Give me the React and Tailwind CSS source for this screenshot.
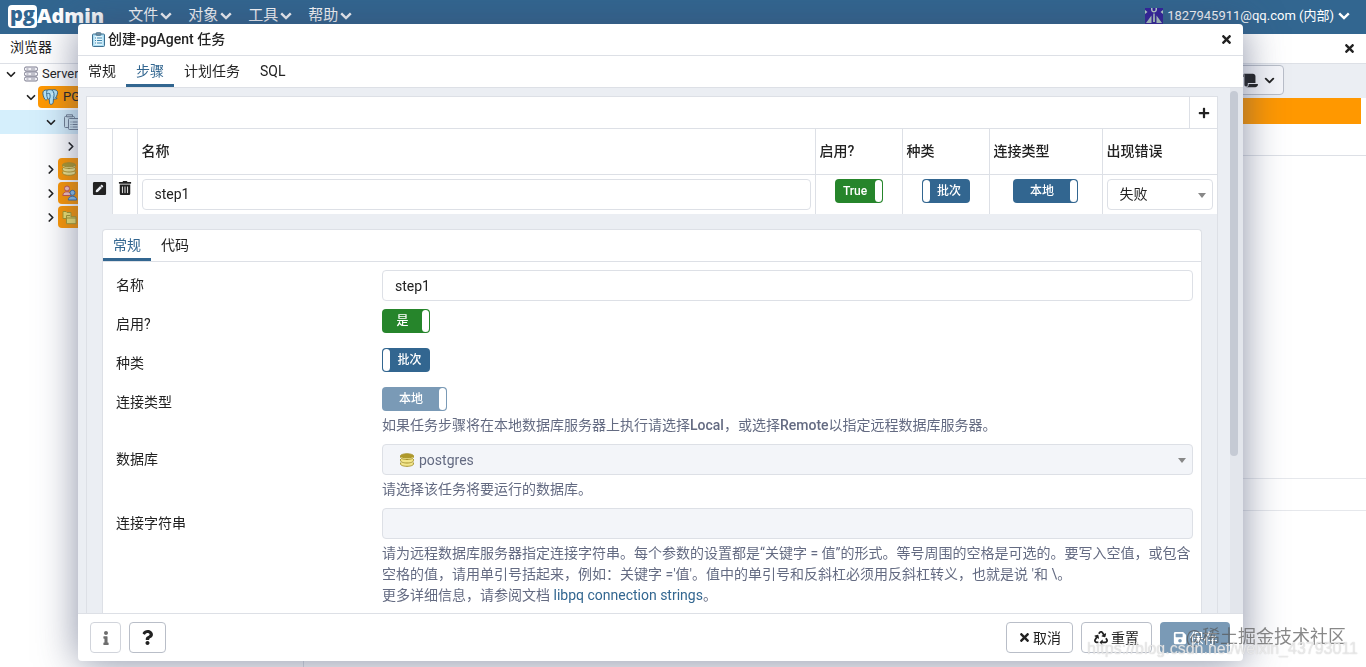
import { useState } from "react";
import {
  FaInfo,
  FaPenSquare,
  FaPlus,
  FaQuestion,
  FaRecycle,
  FaSave,
  FaScroll,
  FaTimes,
  FaTrashAlt,
} from "react-icons/fa";
import { FiChevronDown, FiChevronRight } from "react-icons/fi";

const MENUS = ["文件", "对象", "工具", "帮助"];

function MenuChevron() {
  return (
    <svg width="12" height="8" viewBox="0 0 12 8" fill="none" aria-hidden="true">
      <path d="M1.200 1.300L6 6l4.800-4.700" stroke="currentColor" strokeWidth="2.400" />
    </svg>
  );
}

function ClipboardIcon() {
  return (
    <svg width="13" height="15" viewBox="0 0 13 15" aria-hidden="true">
      <rect x="0.5" y="2" width="12" height="12.5" rx="1" fill="#a9dcf3" stroke="#3f6f8f" />
      <rect x="2.5" y="4" width="8" height="9" fill="#e6f6fc" />
      <rect x="4" y="0.5" width="5" height="3" rx="1" fill="#6f8a9c" stroke="#3f6f8f" strokeWidth="0.6" />
      <path d="M3 6h1M5 6h5M3 8.500h1M5 8.500h5M3 11h1M5 11h5" stroke="#3f87b0" />
    </svg>
  );
}

function ServersIcon() {
  return (
    <svg width="14" height="16" viewBox="0 0 14 16" fill="#f1f1f6" stroke="#7d7d8f" aria-hidden="true">
      <rect x="0.5" y="1" width="13" height="4" rx="1.5" />
      <rect x="0.5" y="6" width="13" height="4" rx="1.5" />
      <rect x="0.5" y="11" width="13" height="4" rx="1.5" />
      <path d="M2.5 3h2M2.5 8h2M2.5 13h2M7 3h4M7 8h4M7 13h4" strokeWidth="0.8" />
    </svg>
  );
}

function ElephantIcon() {
  return (
    <svg width="17" height="16" viewBox="0 0 17 16" aria-hidden="true">
      <path
        d="M5 1.2C2.4.6.8 2 .9 4.3c.1 2.4 1.4 6 2.8 6.6.8.3 1.5-.6 2-1.2.5.5 1 .6 1.6.6l.2 3.6c.1 1.2 1 1.6 1.9 1.4 1.200-.2 1.700-.9 1.800-2l.3-3.600c1.200.6 2.700.4 3.700-.4-.7-.1-1.300-.1-1.600-.5 1.500-2 2.400-5.200 1.800-6.400C14.200.4 11.700.4 10 1 8.500.5 6.400.6 5 1.200z"
        fill="#b4e4f7"
        stroke="#2a5f86"
        strokeWidth="0.9"
      />
      <path d="M5 1.500C4.300 4 4.600 7 5.600 9.600M10.200 1.200c1.800 1.700 2.400 4.300 1.400 8M7.400 10c.9-1.400.9-3.600.3-5.500M5 5c1-.8 2-.8 2.700-.4" fill="none" stroke="#2a5f86" strokeWidth="0.9" />
      <path d="M9.500 5.200c.5-.4 1.200-.3 1.500.1" fill="none" stroke="#fff" />
    </svg>
  );
}

function JobsIcon() {
  return (
    <svg width="16" height="16" viewBox="0 0 16 16" fill="#d3e9f4" stroke="#6e7f92" aria-hidden="true">
      <rect x="0.500" y="2.500" width="10" height="11" rx="1" />
      <path d="M2.500 0.800h6v2h-6z" />
      <rect x="4.500" y="4.500" width="11" height="11" rx="1" />
      <path d="M6.500 8h1M8.500 8h5M6.500 10.500h1M8.500 10.500h5M6.500 13h1M8.500 13h5" />
    </svg>
  );
}

function DatabaseIcon() {
  return (
    <svg width="14" height="14" viewBox="0 0 14 14" fill="#f3e68b" stroke="#a8942c" aria-hidden="true">
      <path d="M.600 9.500v1.600c0 1.200 2.800 2.200 6.400 2.200s6.400-1 6.400-2.200V9.500" />
      <path d="M.600 6v1.800C.600 9 3.400 10 7 10s6.400-1 6.400-2.200V6" />
      <path d="M.600 2.800v1.500c0 1.200 2.800 2.200 6.400 2.200s6.400-1 6.400-2.200V2.800" />
      <ellipse cx="7" cy="2.800" rx="6.400" ry="2" fill="#b09a2b" />
    </svg>
  );
}

function RolesIcon() {
  return (
    <svg width="16" height="16" viewBox="0 0 16 16" aria-hidden="true">
      <g fill="#f6c5c0" stroke="#c9544d">
        <circle cx="5" cy="3.500" r="2.500" />
        <path d="M.800 10.500c0-5 8.400-5 8.400 0z" />
      </g>
      <g fill="#8fc4ef" stroke="#3a6fa8">
        <circle cx="10.500" cy="7.800" r="2.500" />
        <path d="M6.300 15c0-5 8.400-5 8.400 0z" />
      </g>
    </svg>
  );
}

function TablespaceIcon() {
  return (
    <svg width="15" height="15" viewBox="0 0 15 15" fill="#f1e46e" stroke="#a59a2c" aria-hidden="true">
      <path d="M1 1.500h3l1 1h4v6H1z" />
      <path d="M4.500 5.500h3.500l1 1.200h5v7H4.500z" />
      <path d="M4.500 8h9.500" />
    </svg>
  );
}

function Avatar() {
  return (
    <svg width="18" height="16" viewBox="0 0 18 16" aria-hidden="true">
      <rect width="18" height="16" fill="#33209c" />
      <path
        d="M6 0v1.500C6 3.500 7.500 4.500 9 4.500s3-1 3-3V0h-1.500v1.500C10.500 2.500 9.800 3 9 3s-1.500-.5-1.500-1.500V0zM8.300 5.500h1.400L10 14H8zM1 15l5.500-7.500V15zM17 15l-5.500-7.500V15zM0 2l2.500 2L0 6zM18 2l-2.500 2L18 6z"
        fill="#b9d3c8"
      />
    </svg>
  );
}

const TREE = [
  { label: "Servers", icon: ServersIcon, indent: "pl-1", open: true },
  { label: "PG", icon: ElephantIcon, indent: "pl-6", open: true, color: true },
  { label: "pgAgent", icon: JobsIcon, indent: "pl-11", open: true, active: true },
  { label: "", icon: null, indent: "pl-16", open: false },
  { label: "", icon: DatabaseIcon, indent: "pl-11", open: false, color: true },
  { label: "", icon: RolesIcon, indent: "pl-11", open: false, color: true },
  { label: "", icon: TablespaceIcon, indent: "pl-11", open: false, color: true },
];

function TopBar() {
  return (
    <header className="flex h-[34px] shrink-0 items-center bg-[#326690] pr-4 pb-0.5 pl-2 text-white">
      <div className="flex items-center font-['Open_Sans',sans-serif] text-xl leading-6 font-extrabold">
        <span className="flex h-[23px] items-center rounded-sm bg-white px-0.5 pb-1 text-[#326690]">pg</span>
        <span>Admin</span>
      </div>
      <nav className="ml-6 flex gap-4">
        {MENUS.map((m) => (
          <button key={m} type="button" className="flex items-center gap-0.5 text-[15px]">
            {m}
            <MenuChevron />
          </button>
        ))}
      </nav>
      <button type="button" className="ml-auto flex items-center gap-1 text-[13px]">
        <Avatar />
        <span>1827945911@qq.com (内部)</span>
        <MenuChevron />
      </button>
    </header>
  );
}

function Browser() {
  return (
    <aside className="w-[304px] shrink-0 overflow-hidden border-r border-[#dde0e6] bg-white">
      <h2 className="flex h-[30px] items-center border-b border-[#dde0e6] pb-1 pl-2.5 text-sm">浏览器</h2>
      <ul className="-mt-0.5">
        {TREE.map((n, i) => (
          <li
            key={i}
            className={`flex h-6 ${n.color ? "items-start" : "items-center"} ${n.indent} ${
              n.active ? "bg-[#d5effc]" : ""
            }`}
          >
            <span className="flex h-[22px] w-[14px] shrink-0 items-center justify-center text-[#222]">
              {n.open ? <FiChevronDown size={15} strokeWidth={3} /> : <FiChevronRight size={15} strokeWidth={3} />}
            </span>
            <span
              className={`flex h-[22px] items-center gap-1 rounded-sm text-[13px] ${
                n.color ? "bg-[#ff9800] pr-24 pl-1" : "pl-1.5"
              }`}
            >
              {n.icon && <n.icon />}
              {n.label}
            </span>
          </li>
        ))}
      </ul>
    </aside>
  );
}

function Workspace() {
  return (
    <main className="flex min-w-0 flex-1 flex-col bg-white">
      <div className="flex h-[30px] items-center justify-end border-b border-[#dde0e6] pr-2.5">
        <button type="button" aria-label="关闭面板">
          <FaTimes size={13} />
        </button>
      </div>
      <div className="flex h-[34px] items-start justify-end bg-[#ebeef3] pt-px pr-[82px]">
        <button
          type="button"
          aria-label="脚本"
          className="flex h-[30px] items-center gap-1 rounded-sm border border-[#b9bec8] bg-[#f4f5f9] px-1.5"
        >
          <FaScroll size={17} />
          <FiChevronDown size={15} strokeWidth={3} />
        </button>
      </div>
      <div className="mr-[5px] h-[26px] bg-[#ff9800]" />
      <div className="h-8 border-b border-[#dde0e6]" />
      <div className="h-[323px] border-b border-[#e6e8ec]" />
      <div className="h-8 border-b border-[#e6e8ec]" />
    </main>
  );
}

const TOGGLE_BG = {
  green: "bg-[#26852b]",
  blue: "bg-[#326690]",
  muted: "bg-[#7a9ab6]",
};

/* The handle sits on the right when the switch is on */
function Toggle({ text, label, defaultOn = false, tone, wide = false, disabled = false }) {
  const [on, setOn] = useState(defaultOn);
  return (
    <label
      className={`flex h-6 items-center rounded-sm p-px text-xs font-medium text-white ${TOGGLE_BG[tone]} ${
        wide ? "w-[65px]" : "w-12"
      } ${on ? "" : "flex-row-reverse"}`}
    >
      <input
        type="checkbox"
        aria-label={label}
        className="sr-only"
        checked={on}
        disabled={disabled}
        onChange={(e) => setOn(e.target.checked)}
      />
      <span className="flex-1 text-center leading-5">{text}</span>
      <span className="h-[22px] w-[7px] rounded-sm bg-white" />
    </label>
  );
}

const TH = "border-r border-b border-[#dde0e6] px-1 text-left font-medium last:border-r-0";
const TD = "border-r border-[#dde0e6] px-1 pt-1 align-top last:border-r-0";

function StepsTable() {
  return (
    <table className="w-full table-fixed border-collapse">
      <colgroup>
        <col className="w-[25px]" />
        <col className="w-[25px]" />
        <col />
        <col className="w-[87px]" />
        <col className="w-[87px]" />
        <col className="w-[113px]" />
        <col className="w-[115px]" />
      </colgroup>
      <thead>
        <tr className="h-[45px] bg-white">
          <th className={TH} />
          <th className={TH} />
          <th className={TH}>名称</th>
          <th className={TH}>启用?</th>
          <th className={TH}>种类</th>
          <th className={TH}>连接类型</th>
          <th className={TH}>出现错误</th>
        </tr>
      </thead>
      <tbody>
        <tr className="h-10 bg-white">
          <td className={`${TD} bg-[#ebeef3]`}>
            <button type="button" aria-label="编辑" className="mt-0.5 flex w-full justify-center">
              <FaPenSquare size={15} />
            </button>
          </td>
          <td className={TD}>
            <button type="button" aria-label="删除" className="mt-0.5 flex w-full justify-center">
              <FaTrashAlt size={14} />
            </button>
          </td>
          <td className={TD}>
            <input
              aria-label="名称"
              defaultValue="step1"
              className="block h-[31px] w-full rounded border border-[#dde0e6] px-3"
            />
          </td>
          <td className={TD}>
            <div className="flex justify-center">
              <Toggle text="True" label="启用?" tone="green" defaultOn />
            </div>
          </td>
          <td className={TD}>
            <div className="flex justify-center">
              <Toggle text="批次" label="种类" tone="blue" />
            </div>
          </td>
          <td className={TD}>
            <div className="flex justify-center">
              <Toggle text="本地" label="连接类型" tone="blue" defaultOn wide />
            </div>
          </td>
          <td className={TD}>
            <div className="relative">
              <select
                aria-label="出现错误"
                className="block h-[31px] w-full appearance-none rounded border border-[#dde0e6] bg-white px-3"
              >
                <option>失败</option>
                <option>成功</option>
                <option>忽略</option>
              </select>
              <Caret />
            </div>
          </td>
        </tr>
      </tbody>
    </table>
  );
}

function Caret() {
  return (
    <span className="pointer-events-none absolute top-[14px] right-[7px] border-x-4 border-t-5 border-x-transparent border-t-[#888]" />
  );
}

function Field({ label, htmlFor, help, children }) {
  return (
    <div className="grid grid-cols-[266px_minmax(0,1fr)]">
      <label htmlFor={htmlFor} className="leading-[31px]">
        {label}
      </label>
      <div className="min-h-[31px]">
        {children}
        {help && <p className="mt-1 leading-[21px] text-[#646b82]">{help}</p>}
      </div>
    </div>
  );
}

function StepForm() {
  return (
    <section className="mx-[15px] mt-[15px] rounded-t border border-b-0 border-[#dde0e6] bg-white">
      <div className="flex h-8 border-b border-[#dde0e6]">
        <button type="button" className="border-b-3 border-[#326690] px-2.5 pt-0.5 text-[#326690]">
          常规
        </button>
        <button type="button" className="border-b-3 border-transparent px-2.5 pt-0.5">
          代码
        </button>
      </div>
      <div className="space-y-2 pt-2 pr-2 pb-10 pl-[13px]">
        <Field label="名称" htmlFor="step-name">
          <input
            id="step-name"
            defaultValue="step1"
            className="block h-[31px] w-full rounded border border-[#dde0e6] px-3"
          />
        </Field>
        <Field label="启用?">
          <Toggle text="是" label="启用?" tone="green" defaultOn />
        </Field>
        <Field label="种类">
          <Toggle text="批次" label="种类" tone="blue" />
        </Field>
        <Field
          label="连接类型"
          help={
            <>
              如果任务步骤将在本地数据库服务器上执行请选择<b className="font-medium">Local</b>，或选择
              <b className="font-medium">Remote</b>以指定远程数据库服务器。
            </>
          }
        >
          <Toggle text="本地" label="连接类型" tone="muted" defaultOn wide disabled />
        </Field>
        <Field label="数据库" htmlFor="step-db" help="请选择该任务将要运行的数据库。">
          <div className="relative">
            <select
              id="step-db"
              disabled
              className="block h-[31px] w-full appearance-none rounded border border-[#dde0e6] bg-[#f3f5f9] pl-9 text-[#646b82] opacity-100"
            >
              <option>postgres</option>
            </select>
            <span className="pointer-events-none absolute top-[9px] left-[18px]">
              <DatabaseIcon />
            </span>
            <Caret />
          </div>
        </Field>
        <Field
          label="连接字符串"
          htmlFor="step-conn"
          help={
            <>
              请为远程数据库服务器指定连接字符串。每个参数的设置都是“关键字 = 值”的形式。等号周围的空格是可选的。要写入空值，或包含空格的值，请用单引号括起来，例如：关键字
              ='值'。值中的单引号和反斜杠必须用反斜杠转义，也就是说 '和 \。
              <br />
              更多详细信息，请参阅文档{" "}
              <a href="#libpq" className="text-[#326690]">
                libpq connection strings
              </a>
              。
            </>
          }
        >
          <input
            id="step-conn"
            disabled
            className="block h-[31px] w-full rounded border border-[#dde0e6] bg-[#f3f5f9] px-3"
          />
        </Field>
      </div>
    </section>
  );
}

const DIALOG_TABS = ["常规", "步骤", "计划任务", "SQL"];
const FOOT_BTN = "flex h-[31px] items-center justify-center rounded border border-[#b9bec8] bg-white";

function JobDialog() {
  const [tab, setTab] = useState("步骤");
  return (
    <div
      role="dialog"
      aria-label="创建-pgAgent 任务"
      className="fixed top-6 right-[123px] bottom-1.5 left-[78px] flex flex-col overflow-hidden rounded bg-white shadow-[0_2px_40px_rgba(60,70,105,0.6)]"
    >
      <div className="flex h-8 shrink-0 items-center gap-[3px] border-b border-[#dde0e6] pr-2.5 pl-3.5">
        <ClipboardIcon />
        <h1 className="pb-0.5 font-medium">创建-pgAgent 任务</h1>
        <button type="button" aria-label="关闭" className="ml-auto">
          <FaTimes size={13} />
        </button>
      </div>
      <div className="flex h-8 shrink-0 border-b border-[#dde0e6]">
        {DIALOG_TABS.map((t) => (
          <button
            key={t}
            type="button"
            onClick={() => setTab(t)}
            className={`border-b-3 px-2.5 pt-0.5 ${
              t === tab ? "border-[#326690] text-[#326690]" : "border-transparent"
            }`}
          >
            {t}
          </button>
        ))}
      </div>
      <div className="flex min-h-0 flex-1 bg-[#ebeef3]">
        <div className="min-w-0 flex-1 overflow-hidden pt-2 pr-3 pl-2">
          <div className="border border-b-0 border-[#dde0e6]">
            <div className="flex h-8 justify-end border-b border-[#dde0e6] bg-white">
              <button
                type="button"
                aria-label="添加"
                className="flex w-7 items-center justify-center border-l border-[#dde0e6]"
              >
                <FaPlus size={12} />
              </button>
            </div>
            <StepsTable />
            <StepForm />
          </div>
        </div>
        <div className="w-[13px] bg-[#e3e6ec] pt-[3px]">
          <div className="h-[70%] w-2 rounded-full bg-[#c5cad4]" />
        </div>
      </div>
      <div className="flex h-12 shrink-0 items-center gap-2 border-t border-[#dde0e6] pr-[13px] pl-3">
        <button type="button" aria-label="信息" disabled className={`${FOOT_BTN} w-[31px] opacity-65`}>
          <FaInfo size={14} />
        </button>
        <button type="button" aria-label="帮助" className={`${FOOT_BTN} w-[37px]`}>
          <FaQuestion size={15} />
        </button>
        <button type="button" className={`${FOOT_BTN} ml-auto w-[67px] gap-0.5`}>
          <FaTimes size={13} />
          取消
        </button>
        <button type="button" className={`${FOOT_BTN} w-[71px] gap-[3px]`}>
          <FaRecycle size={14} />
          重置
        </button>
        <button
          type="button"
          disabled
          className="flex h-[31px] w-[70px] items-center justify-center gap-[3px] rounded bg-[#7a9ab6] text-white"
        >
          <FaSave size={14} />
          保存
        </button>
      </div>
    </div>
  );
}

export default function App() {
  return (
    <div className="flex h-screen flex-col overflow-hidden bg-white font-[Roboto,'Noto_Sans_CJK_SC',sans-serif] text-sm text-[#222]">
      <TopBar />
      <div className="flex min-h-0 flex-1">
        <Browser />
        <Workspace />
      </div>
      <JobDialog />
      <div className="pointer-events-none fixed right-5 bottom-4 text-lg text-[#555]/70">@稀土掘金技术社区</div>
      <div className="pointer-events-none fixed right-2 bottom-2 font-['Liberation_Sans',sans-serif] text-base leading-5 text-white/60 [text-shadow:0_0_1px_#bbb]">
        https://blog.csdn.net/weixin_43793011
      </div>
    </div>
  );
}
